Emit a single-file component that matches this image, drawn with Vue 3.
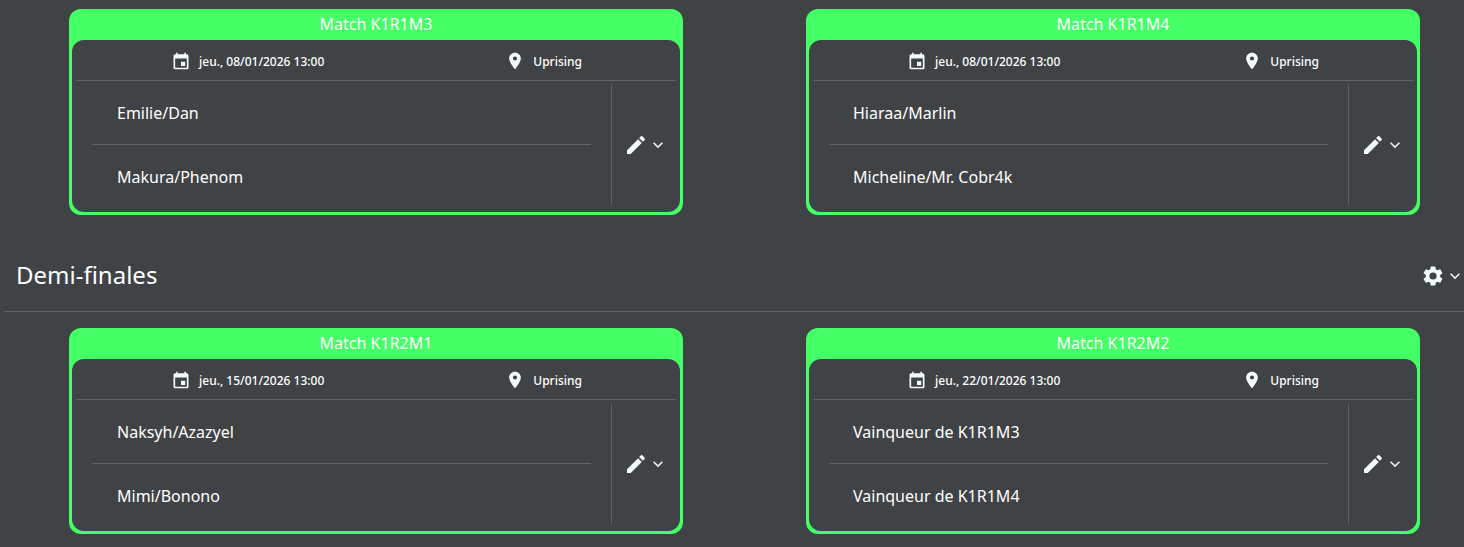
<script setup>
const calendar = 'M19 4h-1V2h-2v2H8V2H6v2H5c-1.11 0-1.99.9-1.99 2L3 20a2 2 0 0 0 2 2h14c1.1 0 2-.9 2-2V6c0-1.1-.9-2-2-2zm0 16H5V9h14v11zm-2-7h-5v5h5v-5z'
const pin = 'M12 2C8.13 2 5 5.13 5 9c0 5.25 7 13 7 13s7-7.75 7-13c0-3.87-3.13-7-7-7zm0 9.5a2.5 2.5 0 0 1 0-5 2.5 2.5 0 0 1 0 5z'
const pencil = 'M3 17.25V21h3.75L17.81 9.94l-3.75-3.75L3 17.25zM20.71 7.04a1 1 0 0 0 0-1.41l-2.34-2.34a1 1 0 0 0-1.41 0l-1.83 1.83 3.75 3.75 1.83-1.83z'
const gear = 'M19.14 12.94c.04-.3.06-.61.06-.94 0-.32-.02-.64-.07-.94l2.03-1.58a.49.49 0 0 0 .12-.61l-1.92-3.32a.49.49 0 0 0-.59-.22l-2.39.96c-.5-.38-1.03-.7-1.62-.94l-.36-2.54a.48.48 0 0 0-.48-.41h-3.84a.47.47 0 0 0-.47.41l-.36 2.54c-.59.24-1.13.57-1.62.94l-2.39-.96a.48.48 0 0 0-.59.22L2.74 8.87a.47.47 0 0 0 .12.61l2.03 1.58c-.05.3-.09.63-.09.94s.02.64.07.94l-2.03 1.58a.49.49 0 0 0-.12.61l1.92 3.32c.12.22.37.29.59.22l2.39-.96c.5.38 1.03.7 1.62.94l.36 2.54c.05.24.24.41.48.41h3.84c.24 0 .44-.17.47-.41l.36-2.54c.59-.24 1.13-.56 1.62-.94l2.39.96c.22.08.47 0 .59-.22l1.92-3.32a.47.47 0 0 0-.12-.61l-2.01-1.58zM12 15.6A3.6 3.6 0 1 1 12 8.4a3.6 3.6 0 0 1 0 7.2z'
const chevron = 'M7.41 8.59 12 13.17l4.59-4.58L18 10l-6 6-6-6z'

const topRow = [
  { name: 'Match K1R1M3', date: 'jeu., 08/01/2026 13:00', teams: ['Emilie/Dan', 'Makura/Phenom'] },
  { name: 'Match K1R1M4', date: 'jeu., 08/01/2026 13:00', teams: ['Hiaraa/Marlin', 'Micheline/Mr. Cobr4k'] }
]
const bottomRow = [
  { name: 'Match K1R2M1', date: 'jeu., 15/01/2026 13:00', teams: ['Naksyh/Azazyel', 'Mimi/Bonono'] },
  { name: 'Match K1R2M2', date: 'jeu., 22/01/2026 13:00', teams: ['Vainqueur de K1R1M3', 'Vainqueur de K1R1M4'] }
]
const rows = [topRow, bottomRow]
</script>

<template>
  <div class="page">
    <template v-for="(row, r) in rows" :key="r">
      <div v-if="r === 1" class="section">
        <h2 class="section-title">Demi-finales</h2>
        <div class="section-menu">
          <svg class="gear" viewBox="0 0 24 24"><path :d="gear" /></svg>
          <svg class="chev" viewBox="0 0 24 24"><path :d="chevron" /></svg>
        </div>
      </div>
      <div class="row">
        <article v-for="m in row" :key="m.name" class="card">
          <header class="card-title">{{ m.name }}</header>
          <div class="card-body">
            <div class="info">
              <div class="info-cell">
                <svg class="info-icon" viewBox="0 0 24 24"><path :d="calendar" /></svg>
                <span>{{ m.date }}</span>
              </div>
              <div class="info-cell">
                <svg class="info-icon" viewBox="0 0 24 24"><path :d="pin" /></svg>
                <span>Uprising</span>
              </div>
            </div>
            <div class="main">
              <div class="teams">
                <div v-for="t in m.teams" :key="t" class="team">{{ t }}</div>
              </div>
              <div class="actions">
                <svg class="pencil" viewBox="0 0 24 24"><path :d="pencil" /></svg>
                <svg class="chev" viewBox="0 0 24 24"><path :d="chevron" /></svg>
              </div>
            </div>
          </div>
        </article>
      </div>
    </template>
  </div>
</template>

<style>
html, body { margin: 0; background: #3f4346; }
</style>

<style scoped>
.page {
  width: 1464px;
  height: 547px;
  overflow: hidden;
  box-sizing: border-box;
  padding-top: 9px;
  background: #3f4346;
  color: #fff;
  font-family: "Noto Sans", "Open Sans", sans-serif;
}
.row {
  display: flex;
  gap: 123px;
  padding-left: 69px;
}
.card {
  width: 614px;
  height: 206px;
  box-sizing: border-box;
  display: flex;
  flex-direction: column;
  background: #44ff66;
  border-radius: 12px;
  padding: 0 3px 3px;
}
.card-title {
  height: 31px;
  line-height: 30px;
  text-align: center;
  font-size: 16px;
  font-weight: 450;
  flex: none;
}
.card-body {
  flex: 1;
  background: #3f4346;
  border-radius: 12px;
  padding: 0 4px;
  display: flex;
  flex-direction: column;
}
.info {
  height: 41px;
  box-sizing: border-box;
  flex: none;
  display: flex;
  gap: 181px;
  padding: 2px 0 0 95px;
  border-bottom: 1px solid #5f6366;
  font-size: 12px;
  font-weight: 500;
}
.card:nth-child(2) .info { padding-left: 94px; gap: 182px; }
.info-cell {
  display: flex;
  align-items: center;
  gap: 8px;
}
.info-icon { width: 20px; height: 20px; fill: #f2fbfb; flex: none; }
.main {
  flex: 1;
  display: flex;
  padding: 4px 0 7px;
}
.teams {
  width: 536px;
  box-sizing: border-box;
  padding: 0 20px 0 16px;
  display: flex;
  flex-direction: column;
  border-right: 1px solid #5f6366;
}
.team {
  box-sizing: border-box;
  display: flex;
  align-items: center;
  padding-left: 25px;
  font-size: 16px;
  font-weight: 450;
}
.card:nth-child(2) .team { padding-left: 24px; }
.team:first-child {
  flex: none;
  height: 59px;
  padding-bottom: 4px;
}
.team + .team {
  flex: 1;
  border-top: 1px solid #5f6366;
  padding-top: 4px;
}
.actions {
  flex: 1;
  display: flex;
  align-items: center;
  justify-content: center;
  padding-left: 4px;
}
.pencil { width: 24px; height: 24px; fill: #f2fbfb; flex: none; }
.chev { width: 20px; height: 20px; fill: #e6f1f1; flex: none; }
.section {
  position: relative;
  height: 113px;
  margin-left: 4px;
  box-sizing: border-box;
  padding-left: 12px;
  display: flex;
  align-items: flex-start;
  justify-content: space-between;
}
.section::after {
  content: "";
  position: absolute;
  left: 0;
  right: 0;
  bottom: 16px;
  height: 1px;
  background: #5f6366;
}
.section-title {
  margin: 43px 0 0;
  font-size: 24px;
  line-height: 34px;
  font-weight: 400;
}
.section-menu {
  display: flex;
  align-items: center;
  margin: 49px -1px 0 0;
}
.gear { width: 24px; height: 24px; fill: #f2fbfb; flex: none; }
</style>
